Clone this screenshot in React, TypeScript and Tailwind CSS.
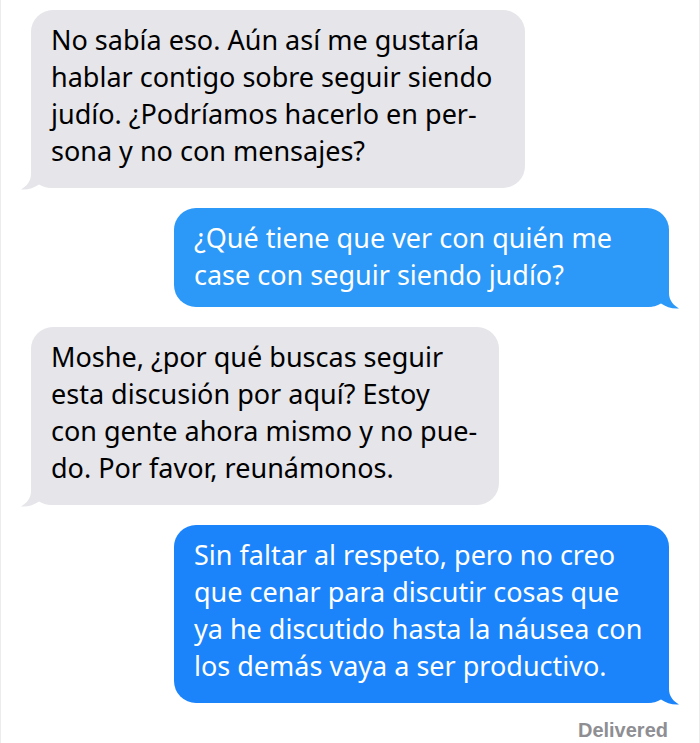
import React from 'react';

type Msg = { from: 'them' | 'me'; lines: string[]; width: string; bg: string; pb: string };

const messages: Msg[] = [
  {
    from: 'them',
    width: 'w-[494px]',
    bg: '#e5e5ea',
    pb: 'pb-[19px]',
    lines: [
      'No sabía eso. Aún así me gustaría',
      'hablar contigo sobre seguir siendo',
      'judío. ¿Podríamos hacerlo en per-',
      'sona y no con mensajes?',
    ],
  },
  {
    from: 'me',
    width: 'w-[495px]',
    bg: '#2c98f8',
    pb: 'pb-[14px]',
    lines: ['¿Qué tiene que ver con quién me', 'case con seguir siendo judío?'],
  },
  {
    from: 'them',
    width: 'w-[468px]',
    bg: '#e5e5ea',
    pb: 'pb-[19px]',
    lines: [
      'Moshe, ¿por qué buscas seguir',
      'esta discusión por aquí? Estoy',
      'con gente ahora mismo y no pue-',
      'do. Por favor, reunámonos.',
    ],
  },
  {
    from: 'me',
    width: 'w-[495px]',
    bg: '#1b84fb',
    pb: 'pb-[19px]',
    lines: [
      'Sin faltar al respeto, pero no creo',
      'que cenar para discutir cosas que',
      'ya he discutido hasta la náusea con',
      'los demás vaya a ser productivo.',
    ],
  },
];

function Tail({ side, color }: { side: 'left' | 'right'; color: string }) {
  // little curled tail at the bottom corner of a bubble
  const isLeft = side === 'left';
  return (
    <svg
      width="32"
      height="30"
      viewBox="0 0 32 30"
      className={`absolute bottom-[-2px] ${isLeft ? 'left-[-10px]' : 'right-[-10px] -scale-x-100'}`}
    >
      <path
        d="M10 0 V14 C10 21 6 26 0 29.5 C7 30 13 28 18 24.5 C22 27 26 28 32 28 V0 Z"
        fill={color}
      />
    </svg>
  );
}

function Bubble({ msg }: { msg: Msg }) {
  const mine = msg.from === 'me';
  return (
    <div className={`flex ${mine ? 'justify-end pr-[30px]' : 'justify-start pl-[30px]'}`}>
      <div
        className={`relative ${msg.width} rounded-[22px] px-[20px] pt-[11px] ${msg.pb} ${
          mine ? 'text-white' : 'text-black'
        }`}
        style={{ backgroundColor: msg.bg }}
      >
        <p className="relative z-10 font-['Noto_Sans',sans-serif] text-[27px] leading-[37px] whitespace-nowrap">
          {msg.lines.map((l, i) => (
            <span key={i} className="block">
              {l}
            </span>
          ))}
        </p>
        <Tail side={mine ? 'right' : 'left'} color={msg.bg} />
      </div>
    </div>
  );
}

export default function App() {
  return (
    <div className="w-[700px] h-[743px] bg-white border-x border-[#ececec] overflow-hidden">
      <div className="flex flex-col gap-[20px] pt-[10px]">
        {messages.map((m, i) => (
          <Bubble key={i} msg={m} />
        ))}
      </div>
      <div className="flex justify-end pr-[31px] pt-[12px]">
        <span className="font-['Liberation_Sans',Arial,sans-serif] font-bold text-[20px] text-[#8e8e93]">
          Delivered
        </span>
      </div>
    </div>
  );
}
